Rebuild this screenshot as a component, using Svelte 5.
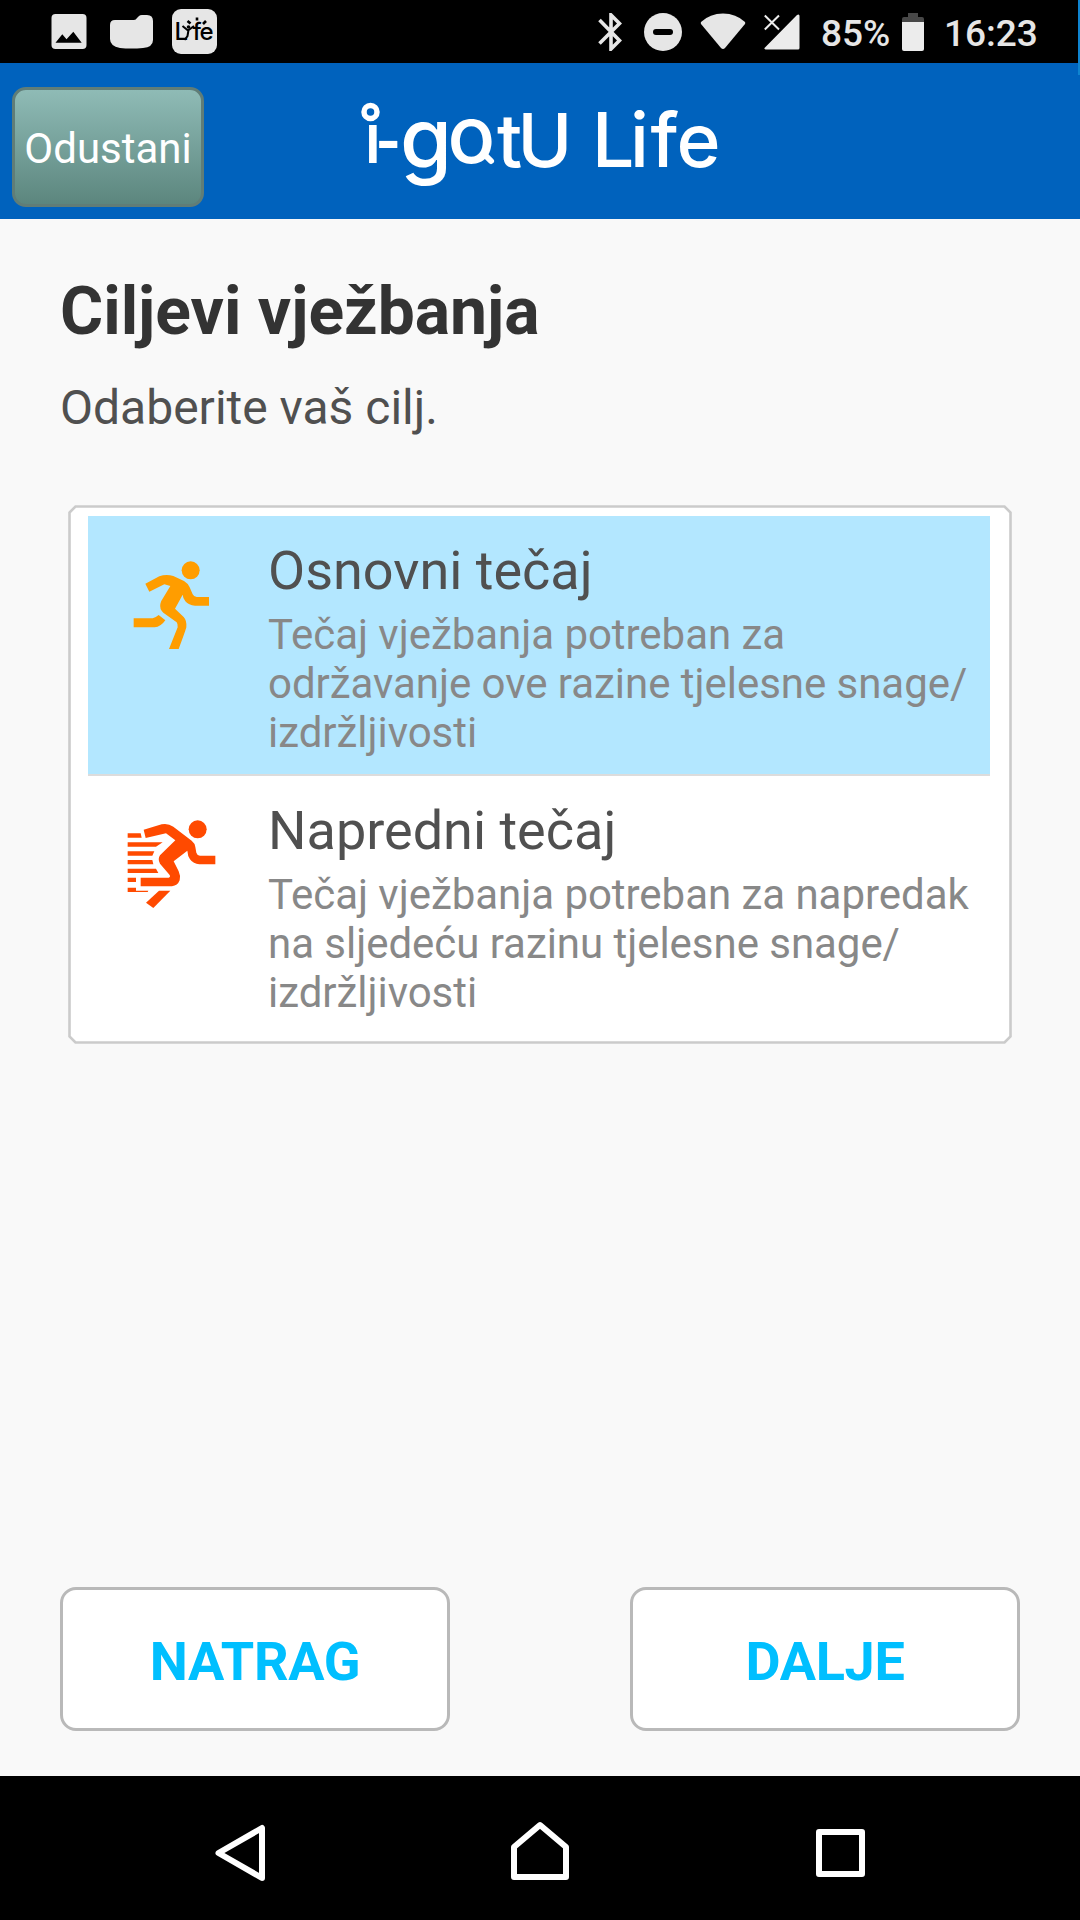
<script lang="ts">
  type Course = {
    id: 'basic' | 'advanced';
    title: string;
    lines: string[];
  };

  const courses: Course[] = [
    {
      id: 'basic',
      title: 'Osnovni tečaj',
      lines: ['Tečaj vježbanja potreban za', 'održavanje ove razine tjelesne snage/', 'izdržljivosti'],
    },
    {
      id: 'advanced',
      title: 'Napredni tečaj',
      lines: ['Tečaj vježbanja potreban za napredak', 'na sljedeću razinu tjelesne snage/', 'izdržljivosti'],
    },
  ];

  let selected = $state('basic');
</script>

<div class="screen">
  <div class="status">
    <div class="status__group status__group--left">
      <svg width="36" height="36" viewBox="0 0 36 36">
        <rect width="35" height="35" x="0.5" rx="4" fill="#e6e6e6" />
        <path d="M4.500 28.700L11.300 20.300L15.500 25.200L22.300 17.700L30.700 28.700Z" fill="#000" />
      </svg>
      <svg width="43" height="34" viewBox="0 0 43 34">
        <path d="M5 5H24Q26 5 27 3L29 1Q30 0 32 0H37Q43 0 43 6V25Q43 32 33 33Q21 34 10 33Q0 31 0 24V10Q0 5 5 5Z" fill="#e6e6e6" />
      </svg>
      <svg width="45" height="45" viewBox="0 0 45 45">
        <rect width="45" height="45" rx="9" fill="#e6e6e6" />
        <text class="badge-text" x="2.500 20.500 27.500" y="31">Lfe</text>
        <circle cx="16.500" cy="18" r="1.800" />
        <path d="M10.500 17L16 21.500L22 17M16.500 21L15.500 27L12.500 31" fill="none" stroke="#000" stroke-width="2" />
        <path d="M15.500 12L18.500 14.500M25 8.500V11.500M34 12L31 15" fill="none" stroke="#000" stroke-width="2.600" />
      </svg>
    </div>
    <div class="status__group status__group--right">
      <svg class="bluetooth" width="24" height="38" viewBox="0 0 24 38">
        <path d="M1.500 7L21.500 27.500L13 36V2L21.500 10.500L1.500 30.500" fill="none" stroke="#e6e6e6" stroke-width="3.600" />
      </svg>
      <svg class="dnd" width="38" height="38" viewBox="0 0 38 38">
        <circle cx="19" cy="19" r="19" fill="#e6e6e6" />
        <rect x="9" y="16" width="20" height="6" rx="3" fill="#000" />
      </svg>
      <svg class="wifi" width="46" height="37" viewBox="0 0 46 37">
        <path d="M1 9Q10 0.500 23 0.500T45 9Q45.500 10 45 11L25 35Q23 37 21 35L1 11Q0.500 10 1 9Z" fill="#e6e6e6" />
      </svg>
      <svg class="signal" width="36" height="36" viewBox="0 0 36 36">
        <path d="M35.500 2V34Q35.500 35.500 34 35.500H1.500Q-0.500 35 1 33.500L33 1Q35.500 -0.500 35.500 2Z" fill="#ececec" />
        <path d="M0.800 1.500L15 15.500M15 1.500L0.800 15.500" stroke="#ececec" stroke-width="2" />
      </svg>
      <span class="percent">85%</span>
      <svg class="battery" width="22" height="38" viewBox="0 0 22 38">
        <path d="M0 9V6Q0 4 2 4H6V0H16V4H20Q22 4 22 6V9Z" fill="#484848" />
        <path d="M0 9H22V36Q22 38 20 38H2Q0 38 0 36Z" fill="#ececec" />
      </svg>
      <span class="time">16:23</span>
    </div>
  </div>

  <header class="topbar">
    <button type="button" class="cancel">Odustani</button>
    <svg class="logo" width="400" height="130" viewBox="0 0 400 130">
      <text class="logo__text" x="24 35.500 60 107.500 157 177.500" y="83 80 88 83 87 87" font-size="74"><tspan font-size="70">i</tspan><tspan class="logo__dash" font-size="54">-</tspan><tspan font-size="84">g</tspan><tspan font-size="79">o</tspan>tU</text>
      <text class="logo__text logo__life" x="252 290 310.500 336.500" y="87" font-size="75">Life</text>
      <circle cx="30.500" cy="32" r="6.500" fill="#0062bd" stroke="#fff" stroke-width="5.500" />
      <path d="M145 75L151 81" stroke="#fff" stroke-width="6" stroke-linecap="round" />
    </svg>
  </header>

  <main class="content">
    <h1>Ciljevi vježbanja</h1>
    <p class="lead">Odaberite vaš cilj.</p>

    <div class="card">
      <svg class="card__frame" width="944" height="539" viewBox="0 0 944 539">
        <path d="M7.500 1.500H936.500L942.500 7.500V531.500L936.500 537.500H7.500L1.500 531.500V7.500Z" fill="#fff" stroke="#cbcbcb" stroke-width="2.600" />
      </svg>
      {#each courses as course}
        <button
          type="button"
          class="course"
          class:course--active={selected === course.id}
          onclick={() => (selected = course.id)}
        >
          <svg class="course__icon" width="120" height="120" viewBox="0 0 360 360">
            {#if course.id === 'basic'}
              <g fill="#ff9d00">
                <circle cx="242" cy="91" r="27" />
                <path d="M106 131L148 109Q168 102 190 108L222 123Q234 130 239 142L248 163Q252 171 260 171H297V197H255Q236 196 226 184Q219 175 218 164L195 206L221 231Q231 242 229 262Q228 268 206 327H177L203 262Q204 252 200 247L160 218Q148 207 151 192Q152 184 157 178L181 138L163 133L118 155Z" />
                <path d="M71 235H128Q135 234 146 225L166 241Q152 261 134 262H71Z" />
              </g>
            {:else}
              <g fill="#ff4a00">
                <circle cx="263" cy="88" r="27" />
                <path d="M101 89L155 73Q174 69 190 80L245 122Q255 130 256 141L259 158Q261 166 270 167H316V193H268Q250 192 240 178Q233 168 232 152L191 184L206 214Q212 226 209 241Q203 257 186 259H92V233H176Q182 232 179 225L150 191Q142 178 150 166L196 121L168 100L107 114Z" />
                <path d="M147 272H181L130 324L108 308Z" />
                <path d="M53 100H92L95 113H53ZM53 127H158L138 140H53ZM53 154H133L127 167H53ZM53 180H127L130 193H53ZM53 206H138L145 219H53ZM53 233H78V246H53ZM53 263H78V272H115L113 276H53Z" />
              </g>
            {/if}
          </svg>
          <span class="course__text">
            <span class="course__title">{course.title}</span>
            {#each course.lines as line}
              <span class="course__line">{line}</span>
            {/each}
          </span>
        </button>
      {/each}
    </div>

    <div class="actions">
      <button type="button" class="action">NATRAG</button>
      <button type="button" class="action">DALJE</button>
    </div>
  </main>

  <nav class="navbar">
    <svg width="50" height="58" viewBox="0 0 50 58">
      <path d="M47 4V54L3.500 29Z" fill="none" stroke="#fff" stroke-width="6" stroke-linejoin="round" />
    </svg>
    <svg class="navbar__home" width="58" height="60" viewBox="0 0 58 60">
      <path d="M3 26L29 4L55 26V56H3Z" fill="none" stroke="#fff" stroke-width="6" stroke-linejoin="round" />
    </svg>
    <svg width="50" height="48" viewBox="0 0 50 48">
      <rect x="3" y="3" width="43" height="42" fill="none" stroke="#fff" stroke-width="6" stroke-linejoin="round" />
    </svg>
  </nav>
</div>

<style>
  :global(body) {
    background: #f9f9f9;
  }

  .screen {
    position: relative;
    display: flex;
    flex-direction: column;
    width: 1080px;
    height: 1920px;
    overflow: hidden;
    background: #f9f9f9;
    font-family: Roboto, 'Liberation Sans', sans-serif;
  }

  /* edge sliver of the swipe panel */
  .screen::after {
    content: '';
    position: absolute;
    top: 0;
    right: 0;
    width: 2px;
    height: 75px;
    background: #0f84d0;
  }

  svg {
    display: block;
    flex: none;
  }

  button {
    font: inherit;
    cursor: pointer;
  }

  .status {
    display: flex;
    justify-content: space-between;
    height: 63px;
    padding: 0 43px 0 51px;
    background: #000;
    color: #e6e6e6;
    font-size: 37px;
    font-weight: 500;
  }

  .status__group {
    display: flex;
    align-items: center;
    height: 63px;
  }

  .status__group--left {
    gap: 21px;
  }

  .status__group--left svg:first-child {
    margin-right: 2px;
  }

  .status__group--left svg:last-child {
    margin-left: -2px;
  }

  .badge-text {
    font-family: Inter, sans-serif;
    font-size: 24px;
    font-weight: 500;
  }

  .dnd {
    margin-left: 22px;
  }

  .wifi {
    margin-left: 18px;
  }

  .signal {
    margin-left: 18px;
  }

  .percent {
    width: 69px;
    margin-left: 21px;
    padding-top: 3px;
  }

  .battery {
    margin-left: 12px;
  }

  .time {
    width: 93px;
    margin-left: 20px;
    padding-top: 3px;
  }

  .topbar {
    display: flex;
    height: 156px;
    background: #0062bd;
  }

  .cancel {
    box-sizing: border-box;
    width: 192px;
    height: 120px;
    margin: 24px 0 0 12px;
    padding: 2px 0 0;
    border: 3px solid #607d77;
    border-radius: 14px;
    background: linear-gradient(#8fbbb6, #5c867e);
    color: #fff;
    font-size: 42px;
  }

  .logo {
    margin: 17px 0 0 136px;
  }

  .logo__text {
    fill: #fff;
    font-family: Inter, sans-serif;
    font-weight: 550;
  }

  .logo__dash {
    font-weight: 800;
  }

  .logo__life {
    font-weight: 450;
  }

  .content {
    display: flex;
    flex: 1;
    flex-direction: column;
    padding: 54px 60px 45px;
  }

  h1 {
    margin: 0;
    color: #333;
    font-size: 66px;
    font-weight: 700;
    line-height: 77px;
  }

  .lead {
    margin: 29px 0 0;
    color: #505050;
    font-size: 48px;
    line-height: 57px;
  }

  .card {
    position: relative;
    box-sizing: border-box;
    height: 539px;
    margin: 69px 8px 0;
    padding: 11px 22px 0 20px;
  }

  .card__frame {
    position: absolute;
    top: 0;
    left: 0;
  }

  .course {
    position: relative;
    display: flex;
    box-sizing: border-box;
    width: 902px;
    height: 260px;
    padding: 24px 0 0 22px;
    border: 0;
    border-bottom: 2px solid transparent;
    background: transparent;
    text-align: left;
  }

  .course--active {
    border-bottom-color: #dcdcdc;
    background: #b3e7ff;
  }

  .course__text {
    display: flex;
    flex-direction: column;
    margin-left: 38px;
  }

  .course__title {
    margin: -1px 0 8px;
    color: #505050;
    font-size: 54px;
    line-height: 63px;
  }

  .course__line {
    color: #888;
    font-size: 42px;
    letter-spacing: -0.04px;
    line-height: 49px;
    white-space: nowrap;
  }

  .actions {
    display: flex;
    justify-content: space-between;
    margin-top: auto;
  }

  .action {
    box-sizing: border-box;
    width: 390px;
    height: 144px;
    padding: 5px 0 0;
    border: 3px solid #b9b9b9;
    border-radius: 16px;
    background: #fff;
    color: #00bfff;
    font-size: 54px;
    font-weight: 700;
    letter-spacing: -0.3px;
  }

  .navbar {
    display: flex;
    align-items: center;
    justify-content: space-between;
    box-sizing: border-box;
    height: 144px;
    padding: 9px 214px 0 215px;
    background: #000;
  }

  .navbar__home {
    margin: 0 1px 3px -1px;
  }
</style>
